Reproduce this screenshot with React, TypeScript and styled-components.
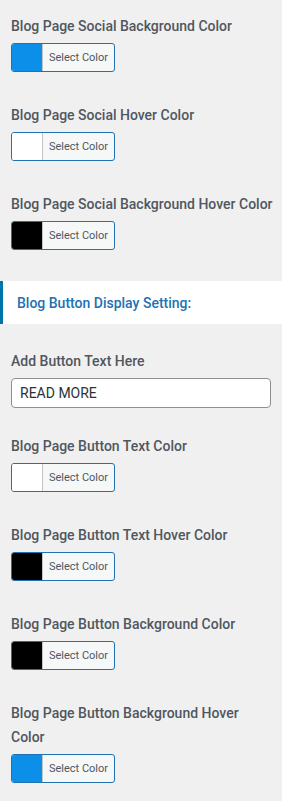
import React from 'react';
import styled, { createGlobalStyle } from 'styled-components';

const GlobalStyle = createGlobalStyle`
  html, body {
    margin: 0;
    padding: 0;
    background: #f0f0f1;
  }
  body {
    font-family: Roboto, "Liberation Sans", Arial, sans-serif;
    -webkit-font-smoothing: antialiased;
  }
`;

interface ColorControlProps {
  label: string;
  color: string;
}

function ColorControl({ label, color }: ColorControlProps) {
  return (
    <Control $gap={31}>
      <Label>{label}</Label>
      <ColorButton type='button'>
        <Swatch $color={color} />
        <ButtonText>Select Color</ButtonText>
      </ColorButton>
    </Control>
  );
}

export default function App() {
  return (
    <Panel>
      <GlobalStyle />
      <Section>
        <ColorControl label='Blog Page Social Background Color' color='#0b8fe8' />
        <ColorControl label='Blog Page Social Hover Color' color='#ffffff' />
        <ColorControl label='Blog Page Social Background Hover Color' color='#000000' />
      </Section>
      <SectionHeader>Blog Button Display Setting:</SectionHeader>
      <Section>
        <Control $gap={26}>
          <Label>Add Button Text Here</Label>
          <TextInput type='text' defaultValue='READ MORE' />
        </Control>
        <ColorControl label='Blog Page Button Text Color' color='#ffffff' />
        <ColorControl label='Blog Page Button Text Hover Color' color='#000000' />
        <ColorControl label='Blog Page Button Background Color' color='#000000' />
        <ColorControl label='Blog Page Button Background Hover Color' color='#0b8fe8' />
      </Section>
    </Panel>
  );
}

const Panel = styled.div`
  width: 282px;
  min-height: 801px;
  padding-top: 14px;
  box-sizing: border-box;
  background: #f0f0f1;
`;

const Section = styled.div`
  padding: 0 11px;
`;

const Control = styled.div<{ $gap: number }>`
  margin-bottom: ${(p) => p.$gap}px;
`;

const Label = styled.div`
  margin-right: -3px;
  font-size: 14px;
  font-weight: 500;
  line-height: 24px;
  color: #50575e;
  margin-bottom: 5px;
`;

const ColorButton = styled.button`
  display: flex;
  align-items: stretch;
  height: 29px;
  width: 104px;
  padding: 0;
  box-sizing: border-box;
  border: 1px solid #2271b1;
  border-radius: 3px;
  background: #f6f7f7;
  overflow: hidden;
  cursor: pointer;
`;

const Swatch = styled.span<{ $color: string }>`
  width: 30px;
  background: ${(p) => p.$color};
  border-right: 1px solid #c3c4c7;
`;

const ButtonText = styled.span`
  flex: 1;
  display: flex;
  align-items: center;
  justify-content: center;
  font-family: Roboto, "Liberation Sans", Arial, sans-serif;
  font-size: 11px;
  color: #50575e;
`;

const SectionHeader = styled.div`
  height: 43px;
  box-sizing: border-box;
  display: flex;
  align-items: center;
  padding-left: 14px;
  margin-bottom: 25px;
  background: #ffffff;
  border-left: 3px solid #0073aa;
  font-size: 14px;
  font-weight: 500;
  color: #2271b1;
`;

const TextInput = styled.input`
  display: block;
  width: 100%;
  height: 30px;
  box-sizing: border-box;
  padding: 0 8px;
  border: 1px solid #8c8f94;
  border-radius: 4px;
  background: #ffffff;
  font-family: Roboto, "Liberation Sans", Arial, sans-serif;
  font-size: 14px;
  color: #2c3338;
  outline: none;
`;
